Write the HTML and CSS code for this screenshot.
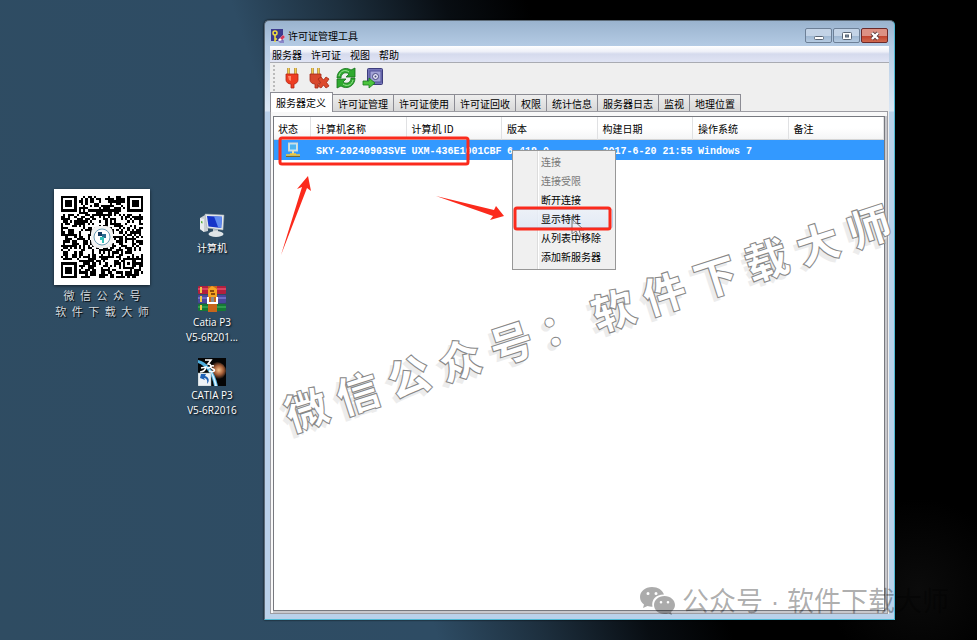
FILE: index.html
```html
<!DOCTYPE html>
<html lang="zh-CN">
<head>
    <meta charset="UTF-8">
    <meta name="viewport" content="width=device-width, initial-scale=1.0">
    <title>许可证管理工具</title>
    <link rel="stylesheet" href="styles.css">
</head>
<body>

    <div class="desktop">

        <div class="qr-card">
            <div class="qr-box">
                <svg id="qr" class="qr" viewBox="0 0 37 37" shape-rendering="crispEdges"></svg>
                <svg class="qr-logo" viewBox="0 0 24 24">
                    <rect x="1" y="1" width="22" height="22" rx="7" fill="#f2f2f2"/>
                    <circle cx="12" cy="12" r="8" fill="#fff" stroke="#6d9db5"/>
                    <path d="M8 7h4v4H8z" fill="#123a63"/>
                    <path d="M12 9h4v4h-4z" fill="#2b6b8f"/>
                    <path d="M10 12h4v6h-2v-3h-2z" fill="#35c0b8"/>
                </svg>
            </div>
            <p>微&ensp;信&ensp;公&ensp;众&ensp;号</p>
            <p>软&ensp;件&ensp;下&ensp;载&ensp;大&ensp;师</p>
        </div>

        <a class="shortcut computer" href="#">
            <svg viewBox="0 0 28 28">
                <path d="M2 7l5-3 3 1v15l-4 1-4-3z" fill="#c9ced2"/>
                <path d="M2 7l4 1v13l-4-3z" fill="#e9ecee"/>
                <path d="M3 10l1.500.5v2L3 12z" fill="#5bb03c"/>
                <path d="M7 3l19 1-1 15-16-2z" fill="#e4e8ea" stroke="#9aa4ab" stroke-width=".5"/>
                <path d="M9 5l15 .7-.8 11.300L10.500 15.500z" fill="#1534c8"/>
                <path d="M16 5.300l8 .4-.8 11.300-3-.4z" fill="#5f8bf0"/>
                <path d="M15 18l5 .6v3h-5z" fill="#c3cacf"/>
                <ellipse cx="18" cy="23" rx="7.500" ry="3" fill="#dfe4e7"/>
            </svg>
            <span>计算机</span>
        </a>

        <a class="shortcut archive" href="#">
            <svg viewBox="0 0 28 28">
                <rect x="0" y="1" width="28" height="8" rx="1" fill="#b3203d"/>
                <rect x="0" y="3" width="28" height="2" fill="#d84462"/>
                <rect x="0" y="10" width="28" height="8" rx="1" fill="#4a469c"/>
                <rect x="0" y="12" width="28" height="2" fill="#6f6cc4"/>
                <rect x="0" y="19" width="28" height="7" rx="1" fill="#157a35"/>
                <rect x="0" y="21" width="28" height="2" fill="#2f9c4e"/>
                <path d="M2 2h2v6H2zM2 11h2v6H2zM2 20h2v5H2z" fill="#f2c84b"/>
                <rect x="10" y="1" width="9" height="26" fill="#c8651b"/>
                <path d="M10 4l4-3 5 3v8h-9z" fill="#f5a524"/>
                <path d="M12 5h4v2h-4zM13 8h4v2h-4z" fill="#8d4a0c"/>
                <path d="M9 12h2v5h7v-5h2v7H9z" fill="#fff"/>
                <rect x="13" y="12" width="3" height="5" fill="#8c8c8c"/>
            </svg>
            <span>Catia P3</span>
            <span>V5-6R201...</span>
        </a>

        <a class="shortcut catia" href="#">
            <svg viewBox="0 0 28 28">
                <defs>
                    <radialGradient id="glow" cx=".6" cy=".45" r=".5">
                        <stop offset="0" stop-color="#f3c08a"/>
                        <stop offset=".5" stop-color="#a8613a"/>
                        <stop offset="1" stop-color="#050505"/>
                    </radialGradient>
                </defs>
                <rect width="28" height="28" fill="#050505"/>
                <circle cx="19" cy="13" r="9" fill="url(#glow)"/>
                <path d="M0 2c9 2 17 11 20 26h-4C14 16 8 8 0 5z" fill="#4fb0e0"/>
                <path d="M8 8c5 4 9 10 11 20h-2C15 18 12 12 8 8z" fill="#d9f3ff"/>
                <path d="M7 2h6l-3 4c4 0 4 4-1 4M3 10l5-1c-1 4-3 5-6 5M16 8c-4-1-4 2-1 3s1 4-4 2" fill="none" stroke="#fff" stroke-width="1.600"/>
                <rect x="0" y="15" width="13" height="13" fill="#eef2f6" stroke="#9aa" stroke-width=".5"/>
                <path d="M9 26c1-4-1-6-3-6l1 2-5-2 1-4 5-0-1 2c4 1 5 5 2 8z" fill="#1f61b5"/>
            </svg>
            <span>CATIA P3</span>
            <span>V5-6R2016</span>
        </a>

        <div class="window">
            <div class="titlebar">
                <svg class="app-icon" viewBox="0 0 14 14">
                    <rect x="0" y="0" width="12" height="12" fill="#3d3b8e"/>
                    <circle cx="4" cy="4" r="2" fill="none" stroke="#f0e040" stroke-width="1.500"/>
                    <path d="M4 6v7M4 10h2" stroke="#f0e040" stroke-width="1.500"/>
                    <path d="M7 11l5-5 2 2-5 5z" fill="#fff"/>
                    <path d="M9 9l3-3 2 2-3 3z" fill="#d63a5a"/>
                    <path d="M7 12l2 2h4v-3" fill="#8a86c8"/>
                </svg>
                <h1>许可证管理工具</h1>
                <div class="win-buttons">
                    <button class="win-btn" aria-label="最小化">
                        <svg viewBox="0 0 12 10"><rect x="1.500" y="5.500" width="9" height="3" rx="1" fill="#fff" stroke="#5a6675"/></svg>
                    </button>
                    <button class="win-btn" aria-label="最大化">
                        <svg viewBox="0 0 12 10"><rect x="1.500" y="1.500" width="9" height="7" rx="1" fill="#fff" stroke="#5a6675"/><rect x="4.500" y="4" width="3" height="2" fill="#7f93ab" stroke="#5a6675"/></svg>
                    </button>
                    <button class="win-btn close" aria-label="关闭">
                        <svg viewBox="0 0 12 10"><path d="M3 2l6 6M9 2L3 8" stroke="#5b3a3a" stroke-width="4"/><path d="M3 2l6 6M9 2L3 8" stroke="#fff" stroke-width="2.400"/></svg>
                    </button>
                </div>
            </div>

            <div class="client">
                <div class="menubar">
                    <button>服务器</button>
                    <button>许可证</button>
                    <button>视图</button>
                    <button>帮助</button>
                </div>

                <div class="toolbar">
                    <span class="grip"></span>
                    <button aria-label="连接">
                        <svg viewBox="0 0 22 22">
                            <path d="M7.500 1v7M14.500 1v7" stroke="#a8741a" stroke-width="2.400"/>
                            <path d="M7.500 1v7M14.500 1v7" stroke="#f2d04a" stroke-width="1.200"/>
                            <path d="M5 7h12v6c0 2-2 4-4 4v4h-3v-4c-3 0-5-2-5-4z" fill="#ee3d22" stroke="#b32412" stroke-width=".8"/>
                            <path d="M7 9h3v5l-2-1z" fill="#ff8a6b"/>
                        </svg>
                    </button>
                    <button aria-label="断开连接">
                        <svg viewBox="0 0 22 22">
                            <path d="M4.500 1v7M10.500 1v7" stroke="#a8741a" stroke-width="2.400"/>
                            <path d="M4.500 1v7M10.500 1v7" stroke="#f2d04a" stroke-width="1.200"/>
                            <path d="M2 7h11v6c0 2-1 4-3 4v4H7v-4c-3 0-5-2-5-4z" fill="#d8482c" stroke="#a32a16" stroke-width=".8"/>
                            <path d="M10 12l3-2 2.500 3L18 10l3 2-2.500 3.500L21 19l-3 2-2.500-3-2.500 3-3-2 2.500-3.500z" fill="#dd4a2c" stroke="#a52a14" stroke-width=".8"/>
                        </svg>
                    </button>
                    <button aria-label="刷新">
                        <svg viewBox="0 0 22 22">
                            <path d="M2 11C2 3 10-1 16 3l4-2v9h-9l3-3c-4-3-8 0-8 4z" fill="#2fa92f" stroke="#14701b" stroke-width=".8"/>
                            <path d="M20 11c0 8-8 12-14 8l-4 2v-9h9l-3 3c4 3 8 0 8-4z" fill="#2fa92f" stroke="#14701b" stroke-width=".8"/>
                            <path d="M4 9c1-5 6-7 10-4M18 13c-1 5-6 7-10 4" fill="none" stroke="#a5e69a"/>
                        </svg>
                    </button>
                    <button aria-label="许可证保险箱">
                        <svg viewBox="0 0 22 22">
                            <rect x="5.500" y="1.500" width="15" height="16" rx="1" fill="#7474b8" stroke="#3d3d7c"/>
                            <rect x="8" y="4" width="11" height="11" fill="#a3a3d6" stroke="#55559a"/>
                            <circle cx="13.500" cy="9.500" r="3" fill="#e6e6f5" stroke="#44447e"/>
                            <circle cx="13.500" cy="9.500" r="1" fill="#44447e"/>
                            <path d="M1 14h6v-3l6 5-6 5v-3H1z" fill="#4cc43e" stroke="#187a1c" stroke-width=".8"/>
                        </svg>
                    </button>
                </div>

                <div class="tabs" role="tablist">
                    <button role="tab" class="active">服务器定义</button>
                    <button role="tab">许可证管理</button>
                    <button role="tab">许可证使用</button>
                    <button role="tab">许可证回收</button>
                    <button role="tab">权限</button>
                    <button role="tab">统计信息</button>
                    <button role="tab">服务器日志</button>
                    <button role="tab">监视</button>
                    <button role="tab">地理位置</button>
                </div>

                <div class="panel">
                    <div class="list">
                        <table>
                            <thead>
                                <tr>
                                    <th class="state">状态</th>
                                    <th>计算机名称</th>
                                    <th>计算机 ID</th>
                                    <th>版本</th>
                                    <th>构建日期</th>
                                    <th>操作系统</th>
                                    <th>备注</th>
                                </tr>
                            </thead>
                            <tbody>
                                <tr>
                                    <td class="state">
                                        <svg viewBox="0 0 16 16">
                                            <rect x="3.500" y="1" width="9" height="8" fill="#bfe6ff" stroke="#d8d8c8"/>
                                            <rect x="5" y="2.500" width="6" height="5" fill="#4fb4ee"/>
                                            <path d="M7 9h2v3H7z" fill="#e8e0b0"/>
                                            <path d="M1 13h14M5 12h6" stroke="#f0c63c" stroke-width="1.500"/>
                                            <path d="M1 14.500h14" stroke="#7b6a28"/>
                                        </svg>
                                    </td>
                                    <td>SKY-20240903SVE</td>
                                    <td>UXM-436E1001CBF</td>
                                    <td>6.419.0</td>
                                    <td>2017-6-20 21:55</td>
                                    <td>Windows 7</td>
                                    <td></td>
                                </tr>
                            </tbody>
                        </table>
                    </div>
                </div>
            </div>
        </div>

        <div class="context-menu" role="menu">
            <button role="menuitem" disabled>连接</button>
            <button role="menuitem" disabled>连接受限</button>
            <button role="menuitem">断开连接</button>
            <button role="menuitem" class="hover">显示特性</button>
            <button role="menuitem">从列表中移除</button>
            <button role="menuitem">添加新服务器</button>
        </div>

        <!-- tutorial marks over the window -->
        <svg class="marks" width="640" height="280" viewBox="0 0 640 280">
            <path d="M572 219v15l4-3 3 6 2-1-2-6h5z" fill="#eef2f8" fill-opacity=".6" stroke="#555" stroke-width=".8"/>
            <g fill="none" stroke="#fb2a1c" stroke-width="3">
                <rect x="280" y="138" width="188" height="26" rx="2"/>
                <rect x="515" y="208" width="95" height="21" rx="2"/>
            </g>
            <g fill="#fb2a1c">
                <path d="M281 255L302 187l-5 2 11-13 3 15-4-3z"/>
                <path d="M436 196L494 210l2-4 8 10-14 4 3-4z"/>
            </g>
        </svg>

        <div class="watermark">微&emsp14;信&emsp14;公&emsp14;众&emsp14;号&emsp14;：&emsp14;软&emsp14;件&emsp14;下&emsp14;载&emsp14;大&emsp14;师</div>

        <div class="account">
            <svg viewBox="0 0 36 30">
                <path fill-rule="evenodd" d="M13 1C6 1 1 5.500 1 11c0 3 1.500 5.500 4 7.500L4 22l4.500-2c2 .6 3.500.8 5 .7C12 14 17 8.500 25 8.600 23.500 4 19 1 13 1zM9 6a1.500 1.500 0 1 1 0 3 1.500 1.500 0 0 1 0-3zm8 0a1.500 1.500 0 1 1 0 3 1.500 1.500 0 0 1 0-3z"/>
                <path fill-rule="evenodd" d="M25.500 10c-6 0-10.500 4-10.500 9s4.500 9 10.500 9c1.500 0 2.800-.2 4-.6L33 29l-1-3c2.500-1.800 4-4.200 4-7 0-5-4.500-9-10.500-9zM22 15a1.300 1.300 0 1 1 0 2.600 1.300 1.300 0 0 1 0-2.600zm7 0a1.300 1.300 0 1 1 0 2.600 1.300 1.300 0 0 1 0-2.600z"/>
            </svg>
            <span>公众号<span class="dot"> · </span>软件下载大师</span>
        </div>
    </div>

    <script>
        const SIZE = 37;
        let seed = 20240903;

        function next() {
            seed = (seed * 1103515245 + 12345) % 2147483648;
            return seed / 2147483648;
        }

        // returns true / false inside a finder pattern, null outside
        function finder(x, y) {
            const corners = [[0, 0], [SIZE - 7, 0], [0, SIZE - 7]];
            for (const [cx, cy] of corners) {
                const dx = x - cx, dy = y - cy;
                if (dx >= -1 && dx <= 7 && dy >= -1 && dy <= 7) {
                    const ring = Math.max(Math.abs(dx - 3), Math.abs(dy - 3));
                    return ring === 3 || ring <= 1;
                }
            }
            const a = Math.max(Math.abs(x - 30), Math.abs(y - 30));
            if (a <= 2) return a !== 1;
            return null;
        }

        function drawQr() {
            let d = "";
            for (let y = 0; y < SIZE; y++) {
                for (let x = 0; x < SIZE; x++) {
                    const fixed = finder(x, y);
                    const dark = next() < 0.52;
                    if (fixed === null ? dark : fixed) d += `M${x} ${y}h1v1h-1z`;
                }
            }
            document.getElementById("qr").innerHTML = `<path d="${d}" fill="#000"/>`;
        }

        drawQr();
    </script>

</body>
</html>
```
FILE: styles.css
```css
* {
    box-sizing: border-box;
}
body {
    margin: 0;
    font-family: "Noto Sans CJK SC", sans-serif;
    font-size: 10px;
    color: #000;
}
button {
    margin: 0;
    padding: 0;
    border: none;
    background: none;
    font: inherit;
    color: inherit;
}
svg {
    display: block;
}
.desktop {
    position: relative;
    min-height: 100vh;
    overflow: hidden;
    background:
        radial-gradient(circle at 94% 92%, #0b0b0b 0, rgba(11, 11, 11, 0) 90px),
        linear-gradient(72deg, #2f4c62 0, #2e4c64 37%, #1d2f3e 46%, #080d12 55%, #000 62%);
}

/* desktop items */
.qr-card {
    position: absolute;
    left: 54px;
    top: 189px;
    width: 96px;
    color: #d5dade;
    text-align: center;
    text-shadow: 1px 1px 1px #000;
}
.qr-box {
    position: relative;
    margin-bottom: 2px;
    padding: 7px;
    background: #fff;
    box-shadow: 0 1px 3px rgba(0, 0, 0, 0.6);
}
.qr-logo {
    position: absolute;
    left: 36px;
    top: 36px;
    width: 24px;
}
.qr-card p {
    margin: 0;
    font-size: 11px;
    line-height: 16px;
    white-space: nowrap;
}
.shortcut {
    position: absolute;
    left: 176px;
    width: 72px;
    color: #fff;
    font-family: "Open Sans", "Noto Sans CJK SC", sans-serif;
    line-height: 15px;
    text-align: center;
    text-decoration: none;
    text-shadow: 1px 1px 2px #000;
}
.shortcut svg {
    width: 28px;
    margin: 0 auto 2px;
}
.shortcut span {
    display: block;
}
.computer { top: 211px; }
.archive { top: 285px; }
.catia { top: 358px; }

/* window */
.window {
    position: absolute;
    left: 264px;
    right: 82px;
    top: 20px;
    bottom: 20px;
    display: flex;
    flex-direction: column;
    padding: 0 5px 5px;
    border: 1px solid #5d6b78;
    border-right-color: #4fb9d4;
    border-bottom-color: #4fb9d4;
    border-radius: 5px 5px 0 0;
    background: linear-gradient(#9ab3ce, #b4cbe4 25px, #dbe7f4 90px, #b9d1ea 91px, #b9d1ea);
    box-shadow: 0 0 2px #000;
}
.titlebar {
    display: flex;
    align-items: center;
    height: 25px;
    padding-top: 4px;
}
.app-icon {
    width: 14px;
    margin: 0 3px 0 1px;
}
.titlebar h1 {
    flex: 1;
    margin: 0;
    font-size: 10px;
    font-weight: normal;
}
.win-buttons {
    display: flex;
    gap: 1px;
    margin-right: 1px;
}
.win-btn {
    display: flex;
    align-items: center;
    justify-content: center;
    width: 27px;
    height: 15px;
    border: 1px solid #6d8097;
    border-radius: 2px;
    background: linear-gradient(#c3d3e6 50%, #9db5d0 50%, #b5cbe2);
}
.win-btn svg {
    width: 12px;
}
.win-btn.close {
    border-color: #6b2a2a;
    background: linear-gradient(#dc9184 50%, #bf3f2a 50%, #d06a50);
}
.client {
    flex: 1;
    display: flex;
    flex-direction: column;
    min-height: 0;
    background: #efefef;
}
.menubar {
    display: flex;
    gap: 9px;
    height: 17px;
    padding-left: 2px;
    border-bottom: 1px solid #a9abb2;
    background: linear-gradient(#fff, #eef0f8 35%, #d5daed 50%, #e0e4f4);
}
.toolbar {
    display: flex;
    align-items: center;
    gap: 5px;
    height: 29px;
    padding-left: 3px;
}
.grip {
    height: 26px;
    margin-right: 1px;
    border-left: 2px dotted #bbb;
}
.toolbar svg {
    width: 22px;
}
.tabs {
    display: flex;
    align-items: flex-end;
    height: 19px;
}
.tabs button {
    height: 17px;
    padding: 0 5px;
    border: 1px solid #8c8c94;
    border-width: 1px 1px 0 0;
    background: linear-gradient(#eee, #d8d8d8);
    line-height: 15px;
}
.tabs .active {
    position: relative;
    height: 20px;
    margin-bottom: -1px;
    padding: 0 6px 0 5px;
    border-left-width: 1px;
    background: #fff;
}
.panel {
    flex: 1;
    display: flex;
    min-height: 0;
    margin-right: 1px;
    padding: 4px 2px 2px;
    border: 1px solid #9c9ca2;
    background: #f8f8f8;
}
.list {
    flex: 1;
    border: 1px solid #77797f;
    background: #fff;
    box-shadow: 1px 1px 0 1px #c8c8cc;
}
table {
    width: 100%;
    table-layout: fixed;
    border-collapse: separate;
    border-spacing: 0;
}
th, td {
    overflow: hidden;
    padding: 0 0 0 5px;
    text-align: left;
    white-space: nowrap;
}
th {
    height: 23px;
    border-right: 1px solid #e0e1e3;
    border-bottom: 1px solid #d5d5d5;
    background: linear-gradient(#fff 50%, #f4f5f6);
    font-weight: normal;
}
td {
    height: 20px;
    padding-top: 3px;
    background: #3399ff;
    color: #fff;
    font-family: "Liberation Mono", monospace;
    font-weight: bold;
    line-height: 12px;
}
.state {
    width: 37px;
}
th.state {
    padding-left: 4px;
}
td.state {
    padding: 0 0 0 11px;
}
td svg {
    width: 16px;
}

/* popup menu */
.context-menu {
    position: absolute;
    left: 512px;
    top: 150px;
    display: flex;
    flex-direction: column;
    width: 104px;
    padding: 1px 2px 3px;
    border: 1px solid #979797;
    background: linear-gradient(to right, #f0f0f0 24px, #dcdcdc 24px, #dcdcdc 25px, #fff 25px, #fff 26px, #f0f0f0 26px);
}
.context-menu button {
    height: 19px;
    padding-left: 26px;
    text-align: left;
}
.context-menu button:disabled {
    color: #777;
}
.context-menu .hover {
    border-radius: 2px;
    background: linear-gradient(rgba(236, 241, 249, 0.8), rgba(222, 232, 246, 0.8));
    box-shadow: inset 0 0 0 1px #b8d0ee;
}
.marks {
    position: absolute;
    left: 0;
    top: 0;
    pointer-events: none;
}

/* watermarks */
.watermark {
    position: absolute;
    left: 587px;
    top: 316px;
    transform: translate(-50%, -50%) rotate(-18deg);
    color: #fff;
    font-size: 43px;
    font-weight: 900;
    line-height: 48px;
    white-space: nowrap;
    -webkit-text-stroke: 1px #888;
    text-shadow: -5px 3px 0 #ececec;
    pointer-events: none;
}
.account {
    position: absolute;
    right: 28px;
    bottom: 22px;
    display: flex;
    align-items: center;
    gap: 7px;
    color: rgba(0, 0, 0, 0.33);
    font-size: 27px;
    line-height: 32px;
    white-space: nowrap;
}
.account svg {
    width: 36px;
    fill: #000;
    fill-opacity: 0.33;
}
.dot {
    font-family: "Liberation Sans", sans-serif;
}
```
